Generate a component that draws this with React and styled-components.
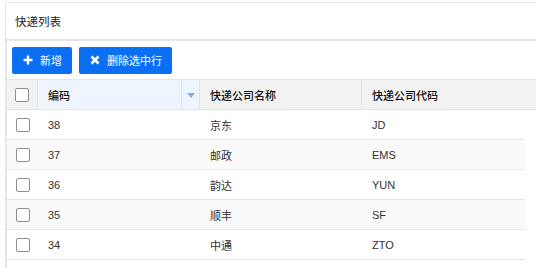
import React from "react";
import styled, { createGlobalStyle } from "styled-components";

const Global = createGlobalStyle`
  html, body { margin: 0; padding: 0; background: #fff; }
  body {
    font-family: "Liberation Sans", "Noto Sans CJK SC", sans-serif;
    font-size: 11px;
    color: #333;
  }
`;

const Page = styled.div`
  width: 536px;
  height: 268px;
  padding: 2px 0 0 5px;
  box-sizing: border-box;
  overflow: hidden;
`;

const Card = styled.div`
  border-top: 1px solid #e8e8e8;
  border-left: 1px solid #e6e6e6;
  height: 100%;
  box-sizing: border-box;
`;

const Title = styled.div`
  height: 36px;
  display: flex;
  align-items: center;
  padding-left: 9px;
  font-size: 11.5px;
  color: #222;
  border-bottom: 2px solid #e6e6e6;
`;

const Body = styled.div`
  border-left: 2px solid #e6e6e6;
  margin-left: -1px;
  height: 100%;
`;

const Toolbar = styled.div`
  height: 38px;
  display: flex;
  align-items: center;
  gap: 7px;
  padding-left: 5px;
  box-sizing: border-box;
`;

const Button = styled.button`
  height: 27px;
  display: inline-flex;
  align-items: center;
  gap: 7px;
  padding: 0 10px 0 11px;
  border: none;
  border-radius: 2px;
  background: #0b6ff4;
  color: #fff;
  font-family: inherit;
  font-size: 11px;
  cursor: pointer;
`;

const Row = styled.div`
  display: grid;
  grid-template-columns: 31px 144px 18px 162px 1fr;
  height: 29px;
  border-bottom: 1px solid #e6e6e6;
  width: ${(p) => (p.$header ? "529px" : "518px")};
  background: ${(p) => (p.$header ? "#f2f2f2" : p.$striped ? "#fafafa" : "#fff")};
  border-top: ${(p) => (p.$header ? "1px solid #e6e6e6" : "none")};
`;

const Cell = styled.div`
  display: flex;
  align-items: center;
  padding-left: ${(p) => (p.$center ? "0" : "10px")};
  justify-content: ${(p) => (p.$center ? "center" : "flex-start")};
  background: ${(p) => (p.$active ? "#eef5fc" : "transparent")};
  border-right: ${(p) => (p.$lined ? "1px solid #e3e3e3" : "none")};
  color: ${(p) => (p.$head ? "#111" : "#333")};
  font-weight: ${(p) => (p.$head ? 500 : 400)};
  white-space: nowrap;
`;

const Check = styled.span`
  width: 12px;
  height: 12px;
  border: 1px solid #8e8e8e;
  border-radius: 2px;
  background: #fff;
  display: inline-block;
`;

const SortArrow = styled.span`
  width: 0;
  height: 0;
  border-left: 4px solid transparent;
  border-right: 4px solid transparent;
  border-top: 5px solid #85aedb;
  margin-top: 1px;
`;

const PlusIcon = () => (
  <svg width="10" height="10" viewBox="0 0 10 10">
    <path d="M5 0.5v9M0.5 5h9" stroke="#fff" strokeWidth="2.4" />
  </svg>
);

const XIcon = () => (
  <svg width="10" height="10" viewBox="0 0 10 10">
    <path d="M1.5 1.5l7 7M8.5 1.5l-7 7" stroke="#fff" strokeWidth="2.6" />
  </svg>
);

const data = [
  { id: "38", name: "京东", code: "JD" },
  { id: "37", name: "邮政", code: "EMS" },
  { id: "36", name: "韵达", code: "YUN" },
  { id: "35", name: "顺丰", code: "SF" },
  { id: "34", name: "中通", code: "ZTO" },
];

export default function App() {
  return (
    <>
      <Global />
      <Page>
        <Card>
          <Title>快递列表</Title>
          <Body>
            <Toolbar>
              <Button>
                <PlusIcon />
                新增
              </Button>
              <Button>
                <XIcon />
                删除选中行
              </Button>
            </Toolbar>
            <Row $header>
              <Cell $center $lined>
                <Check />
              </Cell>
              <Cell $head $active $lined>编码</Cell>
              <Cell $center $active $lined>
                <SortArrow />
              </Cell>
              <Cell $head $lined>快递公司名称</Cell>
              <Cell $head>快递公司代码</Cell>
            </Row>
            {data.map((d, i) => (
              <Row key={d.id} $striped={i % 2 === 1}>
                <Cell $center>
                  <Check />
                </Cell>
                <Cell>{d.id}</Cell>
                <Cell />
                <Cell>{d.name}</Cell>
                <Cell>{d.code}</Cell>
              </Row>
            ))}
          </Body>
        </Card>
      </Page>
    </>
  );
}
